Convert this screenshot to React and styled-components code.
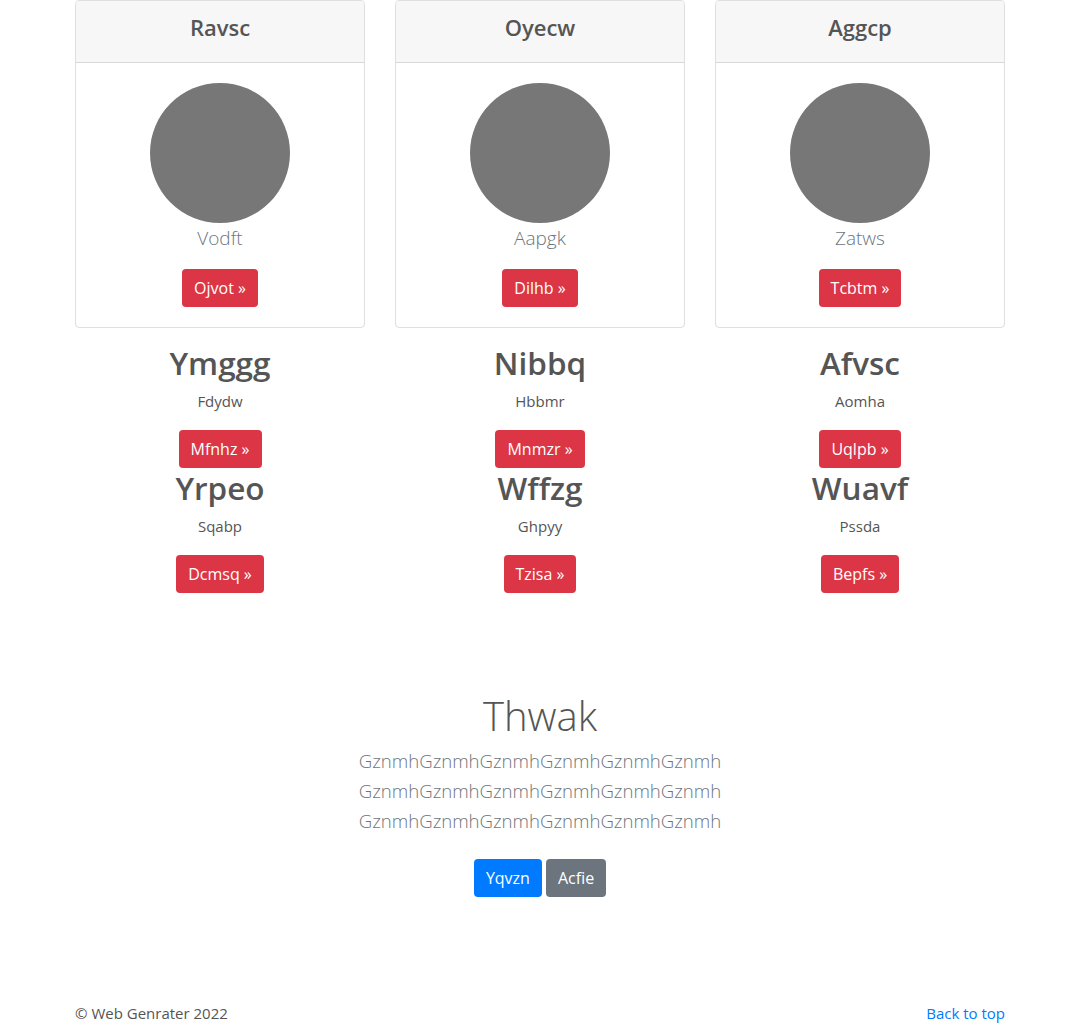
import React from 'react'
import styled, { createGlobalStyle } from 'styled-components'

const Global = createGlobalStyle`
  body {
    margin: 0;
    font-family: 'Open Sans', 'Noto Sans', sans-serif;
    font-size: 16px;
    line-height: 1.5;
    color: #555;
    background: #fff;
  }
  * { box-sizing: border-box; }
`

const Container = styled.div`
  width: 930px;
  margin: 0 auto;
`

const CardRow = styled.div`
  display: grid;
  grid-template-columns: repeat(3, 1fr);
  column-gap: 30px;
`

const Card = styled.div`
  border: 1px solid rgba(0,0,0,.125);
  border-radius: 4px;
  overflow: hidden;
  text-align: center;
`

const CardHeader = styled.div`
  height: 62px;
  padding-top: 12px;
  background: #f7f7f7;
  border-bottom: 1px solid rgba(0,0,0,.125);
`

const CardTitle = styled.h4`
  margin: 0;
  font-size: 22px;
  font-weight: 600;
  line-height: 29px;
  color: #555;
`

const CardBody = styled.div`
  padding: 20px;
  display: flex;
  flex-direction: column;
  align-items: center;
`

const Avatar = styled.div`
  width: 140px;
  height: 140px;
  border-radius: 50%;
  background: #777;
`

const Lead = styled.p`
  margin: 0 0 ${p => p.$mb ?? 16}px;
  font-size: ${p => p.$size || 19}px;
  font-weight: 300;
  line-height: 30px;
  color: #6c757d;
`

const Btn = styled.a`
  display: inline-block;
  padding: 6px 12px;
  font-size: 16px;
  line-height: 26px;
  border-radius: 4px;
  color: #fff;
  text-decoration: none;
  background: ${p => p.$bg || '#dc3545'};
`

const Features = styled.div`
  display: grid;
  grid-template-columns: repeat(3, 1fr);
  column-gap: 30px;
  margin-top: 16px;
  text-align: center;
`

const Feature = styled.div`
  display: flex;
  flex-direction: column;
  align-items: center;
  height: 125px;
`

const FeatureTitle = styled.h2`
  margin: 0 0 7px;
  font-size: 31.5px;
  font-weight: 600;
  line-height: 38px;
  color: #555;
`

const FeatureText = styled.p`
  margin: 0 0 17px;
  font-size: 15px;
  line-height: 24px;
`

const Hero = styled.section`
  margin-top: 93px;
  text-align: center;
  display: flex;
  flex-direction: column;
  align-items: center;
`

const HeroTitle = styled.h1`
  margin: 0 0 1px;
  font-size: 40px;
  font-weight: 300;
  line-height: 58px;
  color: #555;
`

const Actions = styled.div`
  display: flex;
  gap: 4px;
  margin-top: 7px;
`

const Footer = styled.footer`
  margin-top: 104px;
  display: flex;
  justify-content: space-between;
  font-size: 15px;
  line-height: 24px;
`

const TopLink = styled.a`
  color: #007bff;
  text-decoration: none;
`

const cards = [
  { title: 'Ravsc', sub: 'Vodft', btn: 'Ojvot' },
  { title: 'Oyecw', sub: 'Aapgk', btn: 'Dilhb' },
  { title: 'Aggcp', sub: 'Zatws', btn: 'Tcbtm' },
]

const features = [
  { title: 'Ymggg', text: 'Fdydw', btn: 'Mfnhz' },
  { title: 'Nibbq', text: 'Hbbmr', btn: 'Mnmzr' },
  { title: 'Afvsc', text: 'Aomha', btn: 'Uqlpb' },
  { title: 'Yrpeo', text: 'Sqabp', btn: 'Dcmsq' },
  { title: 'Wffzg', text: 'Ghpyy', btn: 'Tzisa' },
  { title: 'Wuavf', text: 'Pssda', btn: 'Bepfs' },
]

const line = 'GznmhGznmhGznmhGznmhGznmhGznmh'

export default function App() {
  return (
    <Container>
      <Global />
      <CardRow>
        {cards.map(c => (
          <Card key={c.title}>
            <CardHeader><CardTitle>{c.title}</CardTitle></CardHeader>
            <CardBody>
              <Avatar />
              <Lead>{c.sub}</Lead>
              <Btn href="#">{c.btn} &raquo;</Btn>
            </CardBody>
          </Card>
        ))}
      </CardRow>
      <Features>
        {features.map(f => (
          <Feature key={f.title}>
            <FeatureTitle>{f.title}</FeatureTitle>
            <FeatureText>{f.text}</FeatureText>
            <Btn href="#">{f.btn} &raquo;</Btn>
          </Feature>
        ))}
      </Features>
      <Hero>
        <HeroTitle>Thwak</HeroTitle>
        <Lead $mb={0} $size={18.6}>{line}</Lead>
        <Lead $mb={0} $size={18.6}>{line}</Lead>
        <Lead $size={18.6}>{line}</Lead>
        <Actions>
          <Btn href="#" $bg="#007bff">Yqvzn</Btn>
          <Btn href="#" $bg="#6c757d">Acfie</Btn>
        </Actions>
      </Hero>
      <Footer>
        <span>&copy; Web Genrater 2022</span>
        <TopLink href="#">Back to top</TopLink>
      </Footer>
    </Container>
  )
}
